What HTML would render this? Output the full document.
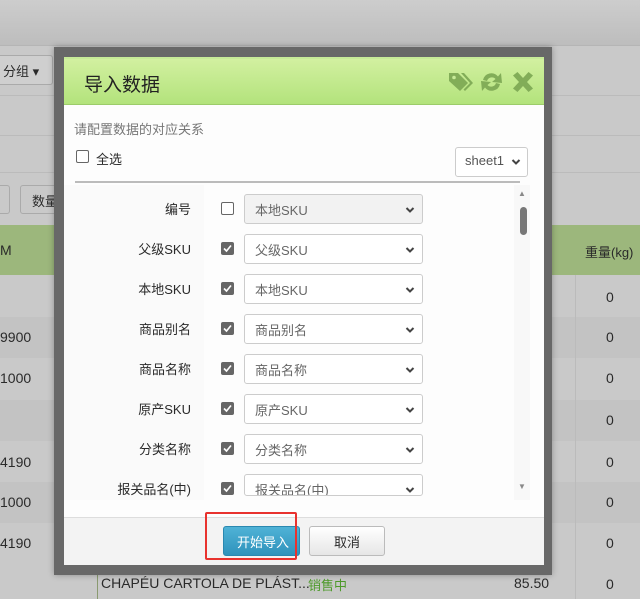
<!DOCTYPE html>
<html><head><meta charset="utf-8"><style>
*{box-sizing:border-box;margin:0;padding:0}
body{width:640px;height:599px;overflow:hidden;background:#c9c9c9;font-family:"Liberation Sans","Noto Sans CJK SC",sans-serif;position:relative;font-size:13px;color:#333}
.a{position:absolute}
.t{position:absolute;font-size:13px;color:#2a2a2a}
</style></head><body>
<div class="a" style="left:0;top:0;width:640px;height:45px;background:linear-gradient(#cdcdcd,#bdbdbd)"></div>
<div class="a" style="left:0;top:45px;width:640px;height:1px;background:#b5b5b5"></div>
<div class="a" style="left:-5px;top:55px;width:58px;height:30px;border:1px solid #aaa;border-radius:3px;background:#cfcfcf"></div>
<div class="t" style="left:3px;top:61px">分组 ▾</div>
<div class="a" style="left:0;top:95px;width:640px;height:1px;background:#bbb"></div>
<div class="a" style="left:0;top:135px;width:640px;height:1px;background:#bbb"></div>
<div class="a" style="left:0;top:172px;width:640px;height:1px;background:#bbb"></div>
<div class="a" style="left:-5px;top:185px;width:15px;height:29px;border:1px solid #aaa;border-radius:3px"></div>
<div class="a" style="left:20px;top:185px;width:40px;height:29px;border:1px solid #aaa;border-radius:3px"></div>
<div class="t" style="left:32px;top:191px">数量</div>
<div class="a" style="left:0;top:225px;width:640px;height:50px;background:#9cb77c"></div>
<div class="t" style="left:0;top:242px;font-size:14px">M</div>
<div class="t" style="left:585px;top:242px;font-size:13px">重量(kg)</div>
<div class="a" style="left:0;top:317px;width:640px;height:41px;background:#c3c3c3"></div>
<div class="a" style="left:0;top:400px;width:640px;height:41px;background:#c3c3c3"></div>
<div class="a" style="left:0;top:482px;width:640px;height:41px;background:#c3c3c3"></div>
<div class="a" style="left:575px;top:275px;width:1px;height:324px;background:#bbb"></div>
<div class="t" style="left:0;top:329px;font-size:14px">9900</div>
<div class="t" style="left:0;top:370px;font-size:14px">1000</div>
<div class="t" style="left:0;top:454px;font-size:14px">4190</div>
<div class="t" style="left:0;top:494px;font-size:14px">1000</div>
<div class="t" style="left:0;top:535px;font-size:14px">4190</div>
<div class="t" style="left:606px;top:289px;font-size:14px">0</div>
<div class="t" style="left:606px;top:329px;font-size:14px">0</div>
<div class="t" style="left:606px;top:370px;font-size:14px">0</div>
<div class="t" style="left:606px;top:412px;font-size:14px">0</div>
<div class="t" style="left:606px;top:454px;font-size:14px">0</div>
<div class="t" style="left:606px;top:494px;font-size:14px">0</div>
<div class="t" style="left:606px;top:535px;font-size:14px">0</div>
<div class="t" style="left:606px;top:576px;font-size:14px">0</div>
<div class="a" style="left:97px;top:565px;width:1px;height:34px;background:#8a9a70"></div>
<div class="t" style="left:101px;top:575px;font-size:14px">CHAPÉU CARTOLA DE PLÁST...</div>
<div class="t" style="left:308px;top:575px;font-size:13px;color:#4d9a2a">销售中</div>
<div class="t" style="left:514px;top:575px;font-size:14px">85.50</div>

<div class="a" style="left:54px;top:47px;width:498px;height:528px;background:#686868;box-shadow:0 0 6px rgba(0,0,0,.3)"></div>
<div class="a" style="left:64px;top:57px;width:480px;height:508px;background:#fdfdfd"></div>
<div class="a" style="left:64px;top:57px;width:480px;height:48px;background:linear-gradient(#d2f0a0,#b3e37c);border-top:2px solid #c7eb98;border-bottom:1px solid #9ccc6a"></div>
<div class="t" style="left:84px;top:70px;font-size:19px;color:#222">导入数据</div>
<svg class="a" style="left:448px;top:70px" width="90" height="24" viewBox="0 0 90 24">
<path d="M1 3 L10 3 L20 13 L12 21 L1 11 Z" fill="#82ad58"/><circle cx="6" cy="7.5" r="1.8" fill="#c7eb98"/>
<path d="M13 3 L16 3 L25 13 L17 21 L15.5 19.5 L22 13 Z" fill="#82ad58"/>
<path d="M35 10 A8.5 8.5 0 0 1 50 6.5 L53 3 L54 13 L44 12 L47.5 9 A5 5 0 0 0 39 11 Z M52 14 A8.5 8.5 0 0 1 37 17.5 L34 21 L33 11 L43 12 L39.5 15 A5 5 0 0 0 48 13 Z" fill="#82ad58"/>
<path d="M65 5.5 L69.5 2 L75 8 L80.5 2 L85 5.5 L79 12 L85 18.5 L80.5 22 L75 16 L69.5 22 L65 18.5 L71 12 Z" fill="#82ad58"/>
</svg>
<div class="t" style="left:74px;top:119px;font-size:13px;color:#777">请配置数据的对应关系</div>
<div class="a" style="left:76px;top:150px;width:13px;height:13px;border:1px solid #666;border-radius:2px;background:#fff"></div>
<div class="t" style="left:96px;top:149px;font-size:13px">全选</div>
<div class="a" style="left:455px;top:147px;width:73px;height:30px;border:1px solid #ccc;border-radius:3px;background:#fff"></div>
<div class="t" style="left:465px;top:153px;color:#555">sheet1</div>
<svg class="a" style="left:511px;top:158px" width="10" height="8" viewBox="0 0 10 8"><path d="M1.5 2 L5 5.5 L8.5 2" stroke="#444" stroke-width="2" fill="none"/></svg>
<div class="a" style="left:75px;top:181px;width:445px;height:2px;background:#bbb"></div>
<div class="a" style="left:64px;top:185px;width:140px;height:315px;background:#fafafa"></div>
<div class="a" style="left:514px;top:185px;width:16px;height:315px;background:#f8f8f8"></div>
<div class="a" style="left:520px;top:207px;width:7px;height:28px;background:#777;border-radius:4px"></div>
<div class="t" style="left:518px;top:189px;font-size:8px;color:#888">▲</div>
<div class="t" style="left:518px;top:482px;font-size:8px;color:#888">▼</div>
<div id="rows"></div>
<div class="a" style="left:64px;top:517px;width:480px;height:48px;background:#f3f3f3;border-top:1px solid #ddd"></div>
<div class="a" style="left:223px;top:526px;width:77px;height:30px;background:linear-gradient(#4fb2d6,#2f93bc);border:1px solid #2a88b0;border-radius:3px"></div>
<div class="t" style="left:237px;top:532px;color:#fff">开始导入</div>
<div class="a" style="left:309px;top:526px;width:76px;height:30px;background:linear-gradient(#fff,#e6e6e6);border:1px solid #bbb;border-radius:3px"></div>
<div class="t" style="left:334px;top:532px">取消</div>
<div class="a" style="left:205px;top:512px;width:92px;height:48px;border:2px solid #e8322e;border-radius:2px"></div>
<script>
var L=["编号","父级SKU","本地SKU","商品别名","商品名称","原产SKU","分类名称","报关品名(中)"],h="";
L.forEach(function(s,i){var y=193+i*40;
h+='<div class="t" style="right:449px;top:'+(y+6)+'px">'+s+'</div>';
h+=i==0?'<div class="a" style="left:221px;top:'+(y+9)+'px;width:13px;height:13px;border:1px solid #666;border-radius:2px;background:#fff"></div>':'<div class="a" style="left:221px;top:'+(y+9)+'px;width:13px;height:13px;border-radius:2px;background:#666"><svg width="13" height="13" viewBox="0 0 13 13" style="position:absolute;left:0;top:0"><path d="M3 6.5 L5.5 9 L10 3.5" stroke="#fff" stroke-width="1.6" fill="none"/></svg></div>';
var hh=i==7?22:30;
h+='<div class="a" style="left:244px;top:'+(y+1)+'px;width:179px;height:'+hh+'px;border:1px solid #ccc;border-radius:3px;background:'+(i==0?'#f2f2f2':'#fff')+';overflow:hidden"><span style="position:absolute;left:10px;top:5px;color:#666">'+s.replace("编号","本地SKU")+'</span><svg width="10" height="8" viewBox="0 0 10 8" style="position:absolute;right:7px;top:11px"><path d="M1.5 2 L5 5.5 L8.5 2" stroke="#444" stroke-width="2" fill="none"/></svg></div>';});
document.getElementById("rows").innerHTML=h;
</script>
</body></html>
